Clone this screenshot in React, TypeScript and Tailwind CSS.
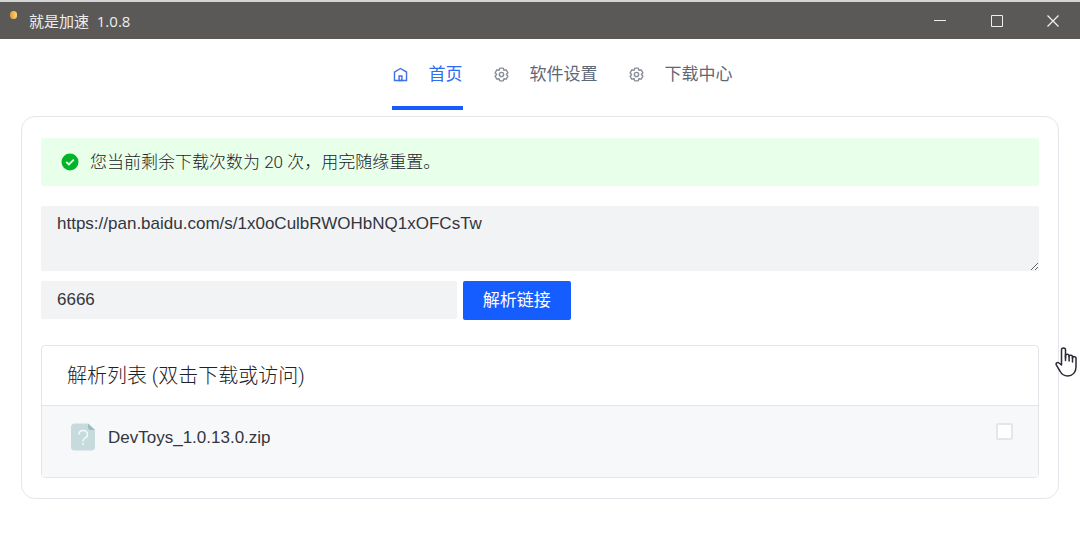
import { useState } from 'react'

const HomeIcon = () => (
  <svg viewBox="0 0 48 48" className="size-[17px]" fill="none" stroke="currentColor" strokeWidth="4">
    <path d="M7 17 24 7l17 10v24H7V17Z" />
    <path d="M20 28h8v13h-8V28Z" />
  </svg>
)

const SettingsIcon = () => (
  <svg viewBox="0 0 48 48" className="size-[17px]" fill="none" stroke="currentColor" strokeWidth="4">
    <path d="M18.797 6.732A1 1 0 0 1 19.76 6h8.48a1 1 0 0 1 .964.732l1.285 4.628a1 1 0 0 0 1.213.7l4.651-1.2a1 1 0 0 1 1.116.468l4.24 7.344a1 1 0 0 1-.153 1.2L38.193 23.3a1 1 0 0 0 0 1.402l3.364 3.427a1 1 0 0 1 .153 1.2l-4.24 7.344a1 1 0 0 1-1.116.468l-4.65-1.2a1 1 0 0 0-1.214.7l-1.285 4.628a1 1 0 0 1-.964.732h-8.48a1 1 0 0 1-.963-.732L17.51 36.64a1 1 0 0 0-1.213-.7l-4.65 1.2a1 1 0 0 1-1.116-.468l-4.24-7.344a1 1 0 0 1 .153-1.2L9.809 24.7a1 1 0 0 0 0-1.402l-3.364-3.427a1 1 0 0 1-.153-1.2l4.24-7.344a1 1 0 0 1 1.116-.468l4.65 1.2a1 1 0 0 0 1.213-.7l1.286-4.628Z" />
    <path d="M30 24a6 6 0 1 1-12 0 6 6 0 0 1 12 0Z" />
  </svg>
)

const CheckIcon = () => (
  <svg viewBox="0 0 18 18" className="size-[18px]" fill="none">
    <circle cx="9" cy="9" r="8.5" fill="#00b42a" />
    <path d="m5.2 8.8 2.7 2.6 4.9-4.8" stroke="#e8ffea" strokeWidth="1.8" />
  </svg>
)

const FileIcon = () => (
  <svg viewBox="0 0 24 28" className="h-7 w-6 shrink-0" fill="none">
    <path d="M4 .5h13L24 7v17a3.5 3.5 0 0 1-3.5 3.5h-17A3.5 3.5 0 0 1 0 24V4A3.5 3.5 0 0 1 4 .5Z" fill="#c7dbde" />
    <path d="M17 .5 24 7h-4a3 3 0 0 1-3-3V.5Z" fill="#9bbac1" />
    <path d="M8 11.5a4.2 4 0 1 1 6.300 3.400c-1.600 1-2.300 1.700-2.300 3.600" stroke="#f4fafa" strokeWidth="1.5" />
    <circle cx="12" cy="21" r="1" fill="#f4fafa" />
  </svg>
)

const HandCursor = () => (
  <svg viewBox="0 0 22 30" className="h-[30px] w-[22px]" fill="#fff" stroke="#2b2b35" strokeWidth="1.5" strokeLinejoin="round" strokeLinecap="round">
    <path d="M6.500 18V3a2 2 0 0 1 4 0v8V9a1.800 1.800 0 0 1 3.600 0v.6a1.700 1.700 0 0 1 3.400.6v.8a1.700 1.700 0 0 1 3.500.8V20c0 5-3.200 9-8.300 9-4 0-6.200-2-7.800-5l-3.500-5.800c-1-2 1-3.600 2.600-2.200L6.500 18Z" />
    <path d="M10.500 8v5.500M14.100 9v5M17.500 10v5" fill="none" />
  </svg>
)

const tabs = [
  { name: '首页', icon: HomeIcon },
  { name: '软件设置', icon: SettingsIcon },
  { name: '下载中心', icon: SettingsIcon },
]

function TitleBar() {
  return (
    <header className="flex h-[39px] items-center border-t-2 border-[#d2d4d5] bg-[#5b5957] pl-2.5 text-[#eeeeee]">
      <span className="mb-3 h-2 w-[7px] rounded-sm bg-gradient-to-r from-[#e09a35] to-[#ffd773]" />
      <h1 className="ml-3 whitespace-pre font-['Open_Sans','Noto_Sans_CJK_SC',sans-serif] text-[15px] leading-5">
        就是加速  1.0.8
      </h1>
      <div className="ml-auto flex items-center">
        <button type="button" aria-label="最小化" className="flex h-9 w-[57px] items-center justify-center">
          <svg viewBox="0 0 14 14" className="size-3.5" stroke="currentColor">
            <path d="M1 6.5h12" />
          </svg>
        </button>
        <button type="button" aria-label="最大化" className="flex h-9 w-[57px] items-center justify-center">
          <svg viewBox="0 0 14 14" className="size-3.5" fill="none" stroke="currentColor">
            <path d="M1.5 1.5h11v11h-11Z" />
          </svg>
        </button>
        <button type="button" aria-label="关闭" className="flex h-9 w-[55px] items-center justify-center">
          <svg viewBox="0 0 14 14" className="size-3.5" fill="none" stroke="currentColor" strokeWidth="1.3">
            <path d="m1.5 1.5 11 11m0-11-11 11" />
          </svg>
        </button>
      </div>
    </header>
  )
}

export default function App() {
  const [active, setActive] = useState('首页')
  const [link, setLink] = useState('https://pan.baidu.com/s/1x0oCulbRWOHbNQ1xOFCsTw')
  const [code, setCode] = useState('6666')
  const [checked, setChecked] = useState(false)

  return (
    <div className="min-h-screen bg-white font-['Liberation_Sans','Noto_Sans_CJK_SC',sans-serif] text-[17px] leading-6 text-[#33363d]">
      <TitleBar />
      <nav className="flex justify-center gap-[30px] pl-11">
        {tabs.map(({ name, icon: Icon }) => (
          <button
            key={name}
            type="button"
            onClick={() => setActive(name)}
            className={`flex h-[71px] items-center gap-5 border-b-4 pt-1 ${
              active === name
                ? 'border-[#165dff] text-[#2f6df5]'
                : 'border-transparent text-[#5f6877]'
            }`}
          >
            <span className={active === name ? 'text-[#3f72e8]' : 'text-[#868d99]'}>
              <Icon />
            </span>
            {name}
          </button>
        ))}
      </nav>
      <main className="mx-[21px] mt-1.5 rounded-[14px] border border-[#e5e6eb] px-[19px] py-5">
        <div
          role="status"
          className="mt-px flex h-12 items-center gap-[11px] rounded-xs bg-[#e8ffea] px-5 font-['Roboto','Noto_Sans_CJK_SC',sans-serif] font-light text-[#1d2129]"
        >
          <CheckIcon />
          您当前剩余下载次数为 20 次，用完随缘重置。
        </div>
        <textarea
          aria-label="分享链接"
          value={link}
          onChange={(e) => setLink(e.target.value)}
          className="mt-5 block h-[65px] w-full resize-y rounded-xs bg-[#f2f3f5] px-4 py-1.5 outline-none"
        />
        <div className="mt-2.5 flex items-start gap-1.5">
          <input
            type="text"
            aria-label="提取码"
            value={code}
            onChange={(e) => setCode(e.target.value)}
            className="h-[38px] w-5/12 rounded-xs bg-[#f2f3f5] px-4 outline-none"
          />
          <button type="button" className="h-[39px] rounded-xs bg-[#165dff] px-5 text-white">
            解析链接
          </button>
        </div>
        <section className="mt-[25px] rounded-sm border border-[#e5e6eb]">
          <h2 className="flex h-[59px] items-center px-[25px] font-['Roboto','Noto_Sans_CJK_SC',sans-serif] text-xl font-light text-[#1d2129]">
            解析列表 (双击下载或访问)
          </h2>
          <ul>
            <li className="flex h-[72px] items-start border-t border-[#e5e6eb] bg-[#f7f8fa] pt-[17px] pr-[25px] pl-[29px]">
              <FileIcon />
              <label htmlFor="file-devtoys" className="mt-[3px] ml-[13px]">
                DevToys_1.0.13.0.zip
              </label>
              <input
                id="file-devtoys"
                type="checkbox"
                checked={checked}
                onChange={() => setChecked(!checked)}
                className="ml-auto size-[17px] appearance-none rounded-xs border-2 border-[#e5e6eb] bg-white checked:bg-[#165dff]"
              />
            </li>
          </ul>
        </section>
      </main>
      <div className="pointer-events-none absolute top-[347px] right-[3px]">
        <HandCursor />
      </div>
    </div>
  )
}
